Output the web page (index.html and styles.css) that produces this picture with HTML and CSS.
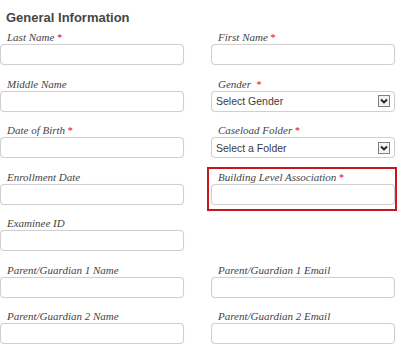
FILE: index.html
```html
<!DOCTYPE html>
<html lang="en">
<head>
  <meta charset="UTF-8" />
  <title>General Information</title>
  <link rel="stylesheet" href="styles.css">
</head>
<body>

<h2>General Information</h2>

<form class="info-form">
  <div class="field">
    <label>Last Name <span class="req">*</span></label>
    <input type="text">
  </div>
  <div class="field">
    <label>First Name <span class="req">*</span></label>
    <input type="text">
  </div>

  <div class="field">
    <label>Middle Name</label>
    <input type="text">
  </div>
  <div class="field">
    <label>Gender &nbsp;<span class="req">*</span></label>
    <div class="select">
      <span>Select Gender</span>
      <span class="arrow"><svg width="8" height="6" viewBox="0 0 8 6"><path d="M1 1.5 L4 4.5 L7 1.5" fill="none" stroke="#222" stroke-width="1.8"/></svg></span>
    </div>
  </div>

  <div class="field">
    <label>Date of Birth <span class="req">*</span></label>
    <input type="text">
  </div>
  <div class="field">
    <label>Caseload Folder <span class="req">*</span></label>
    <div class="select">
      <span>Select a Folder</span>
      <span class="arrow"><svg width="8" height="6" viewBox="0 0 8 6"><path d="M1 1.5 L4 4.5 L7 1.5" fill="none" stroke="#222" stroke-width="1.8"/></svg></span>
    </div>
  </div>

  <div class="field">
    <label>Enrollment Date</label>
    <input type="text">
  </div>
  <div class="field highlight">
    <label>Building Level Association <span class="req">*</span></label>
    <input type="text">
  </div>

  <div class="field">
    <label>Examinee ID</label>
    <input type="text">
  </div>
  <div class="field"></div>

  <div class="field">
    <label>Parent/Guardian 1 Name</label>
    <input type="text">
  </div>
  <div class="field">
    <label>Parent/Guardian 1 Email</label>
    <input type="text">
  </div>

  <div class="field">
    <label>Parent/Guardian 2 Name</label>
    <input type="text">
  </div>
  <div class="field">
    <label>Parent/Guardian 2 Email</label>
    <input type="text">
  </div>
</form>

</body>
</html>
```

FILE: styles.css
```css
body {
  margin: 0;
  background: #fff;
  font-family: "Liberation Sans", Arial, sans-serif;
}

h2 {
  margin: 10px 0 5px;
  padding-left: 6px;
  font-size: 13px;
  line-height: 16px;
  font-weight: bold;
  color: #464646;
}

.info-form {
  display: grid;
  grid-template-columns: 184px 184px;
  column-gap: 27px;
  row-gap: 12.5px;
}

.field {
  display: flex;
  flex-direction: column;
}

label {
  display: block;
  padding-left: 7px;
  height: 13px;
  font-family: "Liberation Serif", "Times New Roman", serif;
  font-style: italic;
  font-size: 11px;
  line-height: 13px;
  color: #444;
}

.req {
  color: #e2001a;
  font-style: normal;
  font-size: 10px;
}

input, .select {
  box-sizing: border-box;
  width: 100%;
  height: 21px;
  margin: 0;
  border: 1px solid #d0d0d0;
  border-radius: 4px;
  background: #fff;
  box-shadow: 0 0 1px #e4e4e4;
}

.select {
  display: flex;
  align-items: center;
  justify-content: space-between;
  padding: 0 4px 0 4px;
  font-size: 10.5px;
  color: #3c3c3c;
}

.arrow {
  display: flex;
  align-items: center;
  justify-content: center;
  width: 10px;
  height: 10px;
  border: 1px solid #808080;
  background: #f2f2f2;
}

.highlight {
  margin: -4px -2px -6px -4px;
  padding: 2px 0 4px 2px;
  border: 2px solid #c8161d;
}
```
